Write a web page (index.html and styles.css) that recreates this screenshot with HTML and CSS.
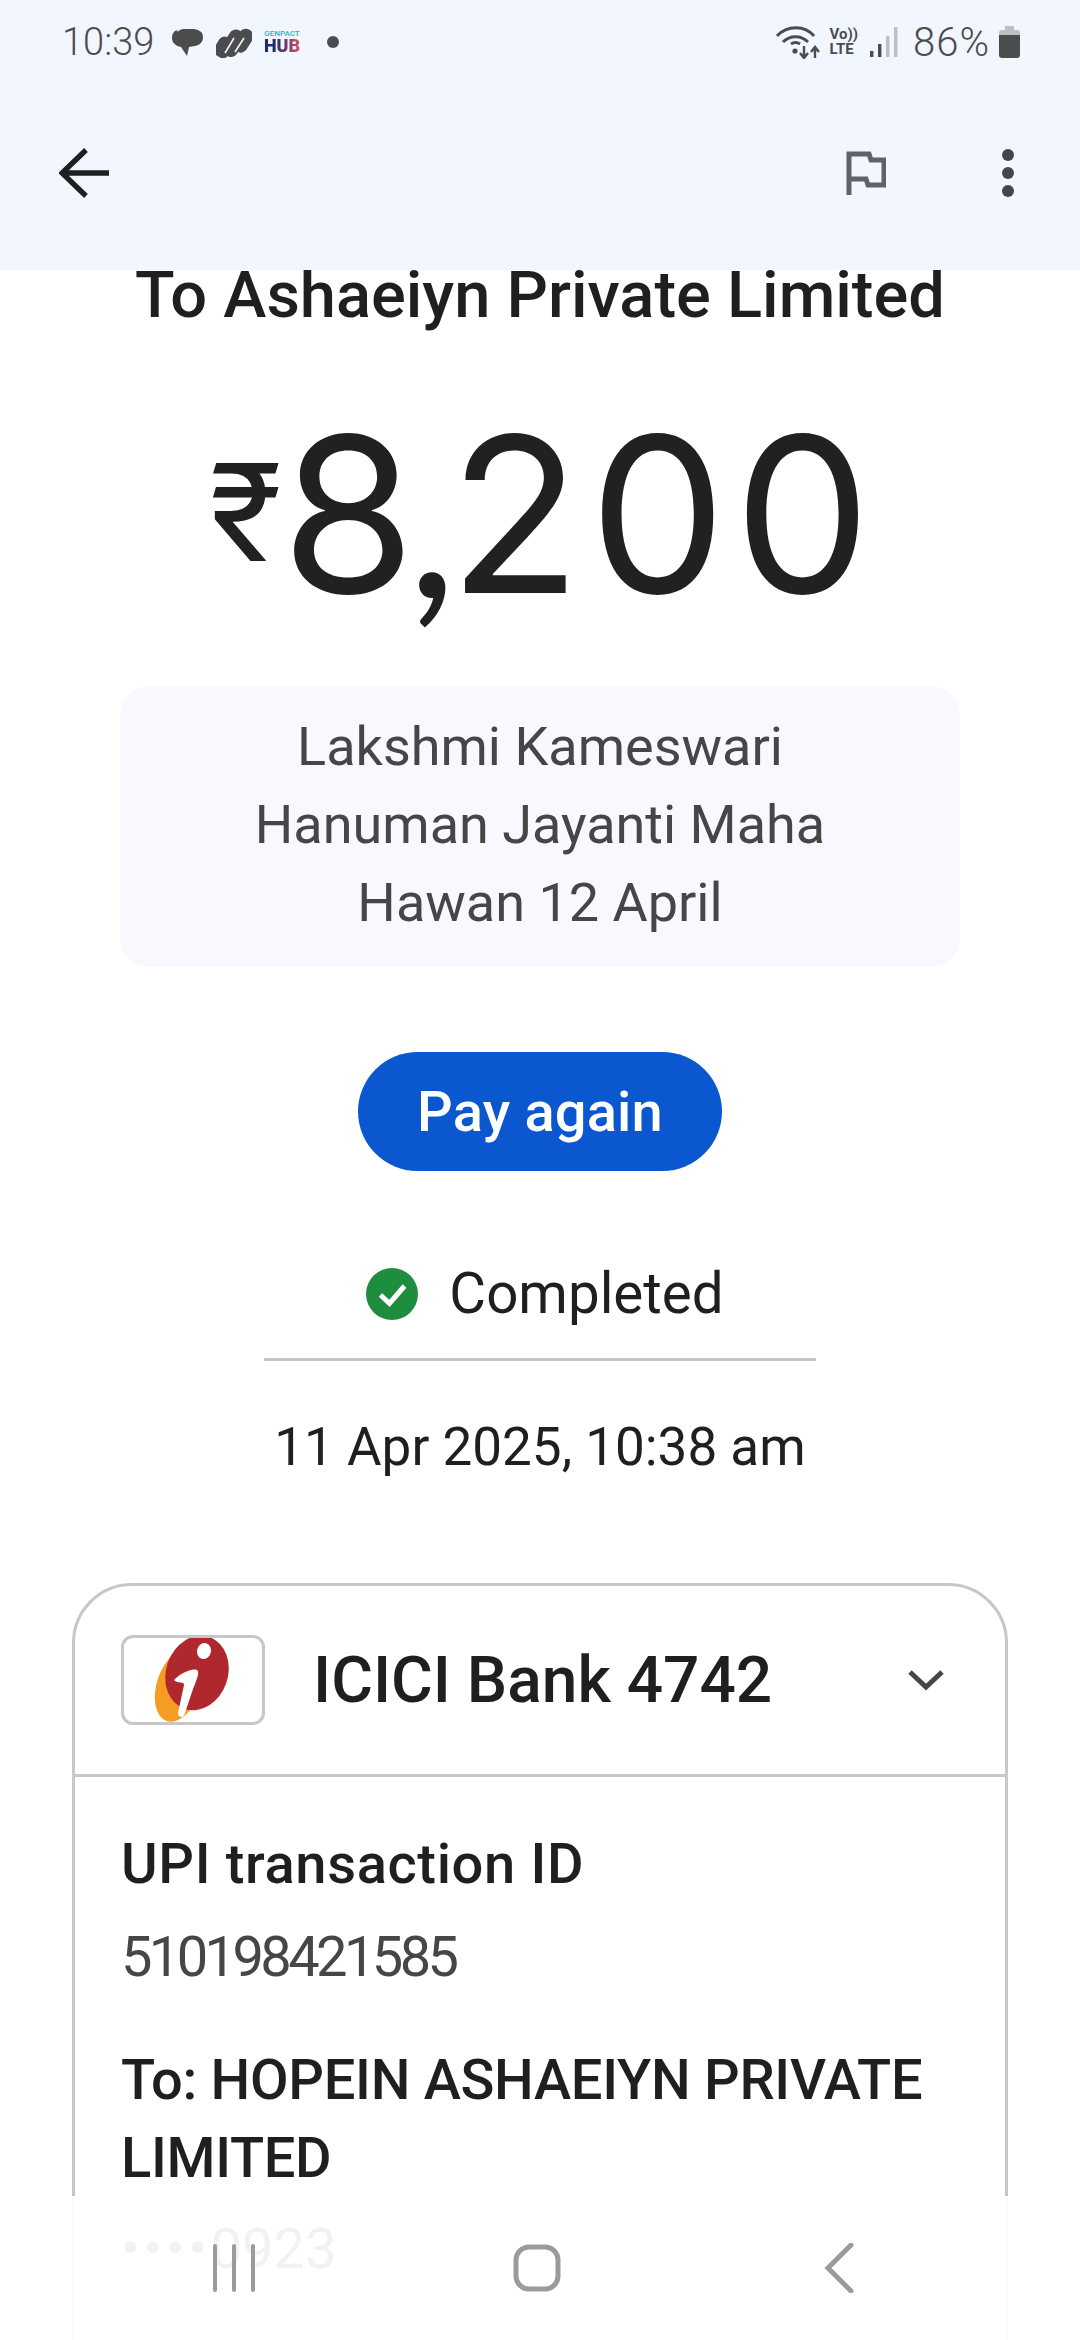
FILE: index.html
```html
<!DOCTYPE html>
<html lang="en">
<head>
<meta charset="utf-8">
<title>Payment details</title>
<link rel="stylesheet" href="styles.css">
</head>
<body>
<div class="screen">
  <header class="appbar">
    <div class="status">
      <div class="status-left">
        <span class="clock">10:39</span>
        <svg class="ic-chat" width="32" height="32" viewBox="0 0 32 32"><path d="M10 3h12c5 0 9 3 9 8s-3 8-8 9l-6 1-2 9-6-9c-5-1-9-4-9-9 0-6 4-9 10-9z" fill="#4b4c4e"/><path d="M5 5c2-2 5-3 8-3h8c3 0 6 1 8 3" fill="none" stroke="#f2f6fe" stroke-width="1.6"/></svg>
        <svg class="ic-app" width="36" height="32" viewBox="0 0 36 32"><g fill="#4b4c4e"><rect x="0" y="11" width="16" height="21" rx="6" transform="rotate(32 8 21)"/><rect x="9" y="3" width="17" height="28" rx="7" transform="rotate(32 17 17)"/><rect x="20" y="2" width="15" height="25" rx="7" transform="rotate(32 27 14)"/></g><path d="M9 27l9-15M19 26l9-14" stroke="#f2f6fe" stroke-width="1.6" fill="none"/></svg>
        <span class="hub"><span class="hub-top">GENPACT</span><span class="hub-main">HUB</span></span>
        <span class="dot"></span>
      </div>
      <div class="status-right">
        <svg width="45" height="34" viewBox="0 0 45 34"><g fill="none" stroke="#4b4c4e" stroke-width="3"><path d="M1 11c10-11 28-11 37 0"/><path d="M7 17c7-7 18-7 25 0"/></g><circle cx="19" cy="26" r="2.6" fill="#4b4c4e"/><path d="M15 19c3-2 6-2 9 0" fill="none" stroke="#4b4c4e" stroke-width="3"/><path d="M28 21v11M24 28l4 5 4-5M39 33V22M35 27l4-5 4 5" fill="none" stroke="#4b4c4e" stroke-width="2.4"/></svg>
        <span class="volte"><span>Vo))</span><span>LTE</span></span>
        <svg class="signal" width="28" height="30" viewBox="0 0 28 30"><rect x="0" y="24" width="3.4" height="6" fill="#4b4c4e"/><rect x="8" y="17" width="3.4" height="13" fill="#4b4c4e"/><rect x="16" y="9" width="3.4" height="21" fill="#bcbfc5"/><rect x="24" y="0" width="3.4" height="30" fill="#bcbfc5"/></svg>
        <span class="battery-text">86%</span>
        <svg class="battery" width="21" height="32" viewBox="0 0 21 32"><path d="M6 0h9v4H6z" fill="#bcbfc5"/><path d="M3 4h15a3 3 0 0 1 3 3v3H0V7a3 3 0 0 1 3-3z" fill="#bcbfc5"/><path d="M0 9h21v20a3 3 0 0 1-3 3H3a3 3 0 0 1-3-3z" fill="#4b4c4e"/></svg>
      </div>
    </div>
    <div class="toolbar">
      <svg width="50" height="50" viewBox="0 0 50 50"><path d="M50 25H4M27 2L3 25l24 23" fill="none" stroke="#1f1f1f" stroke-width="5.4"/></svg>
      <div class="toolbar-right">
        <svg width="40" height="44" viewBox="0 0 40 44"><path d="M3 44V3h20l2 6h13v25H22l-2-6H3" fill="none" stroke="#5f6368" stroke-width="5"/></svg>
        <svg class="kebab" width="14" height="50" viewBox="0 0 14 50"><circle cx="7" cy="7" r="6" fill="#44474a"/><circle cx="7" cy="25" r="6" fill="#44474a"/><circle cx="7" cy="43" r="6" fill="#44474a"/></svg>
      </div>
    </div>
  </header>

  <main class="content">
    <h1 class="payee">To Ashaeiyn Private Limited</h1>
    <div class="amount"><span class="rupee">₹</span><span class="tight">8</span><span class="comma">,</span>200</div>
    <div class="note">Lakshmi Kameswari<br>Hanuman Jayanti Maha<br>Hawan 12 April</div>
    <button class="pay">Pay again</button>
    <div class="state">
      <svg width="52" height="52" viewBox="0 0 52 52"><circle cx="26" cy="26" r="26" fill="#1e8e3e"/><path d="M14.5 27l9 8.5L38.5 18" fill="none" stroke="#fff" stroke-width="5"/></svg>
      <span>Completed</span>
    </div>
    <div class="rule"></div>
    <div class="when">11 Apr 2025, 10:38 am</div>

    <section class="card">
      <div class="card-head">
        <div class="logo">
          <svg width="138" height="84" viewBox="0 0 138 84"><ellipse cx="55" cy="47" rx="22" ry="38" transform="rotate(19 55 47)" fill="#f59d23"/><ellipse cx="73" cy="35" rx="31" ry="38" transform="rotate(19 73 35)" fill="#ae282e"/><ellipse cx="80" cy="13" rx="7" ry="8" transform="rotate(15 80 13)" fill="#fff"/><path d="M50 42c6-6 17-12 23-10 3 2 0 9-4 19l-9 27c-3 2-6 1-6-3l6-28c0-4-6-1-10-5z" fill="#fff"/></svg>
        </div>
        <span class="bank">ICICI Bank 4742</span>
        <svg class="chevron" width="36" height="22" viewBox="0 0 36 22"><path d="M2 3l16 15L34 3" fill="none" stroke="#444746" stroke-width="5"/></svg>
      </div>
      <div class="card-body">
        <div class="label wide">UPI transaction ID</div>
        <div class="value">510198421585</div>
        <div class="label to">To: HOPEIN ASHAEIYN PRIVATE LIMITED</div>
        <div class="value ghost"><span class="dots">••••</span>0923</div>
      </div>
    </section>
  </main>

  <nav class="navbar">
    <svg width="44" height="48" viewBox="0 0 44 48"><path d="M3 2v44M22 2v44M41 2v44" stroke="#9b9b9b" stroke-width="4" stroke-linecap="round"/></svg>
    <svg class="nav-home" width="48" height="48" viewBox="0 0 48 48"><rect x="3" y="3" width="42" height="42" rx="13" fill="none" stroke="#9b9b9b" stroke-width="5"/></svg>
    <svg width="30" height="50" viewBox="0 0 30 50"><path d="M27 2L4 25l23 23" fill="none" stroke="#9b9b9b" stroke-width="5" stroke-linecap="round"/></svg>
  </nav>
</div>
</body>
</html>
```
FILE: styles.css
```css
* { box-sizing: border-box; }
html, body { margin: 0; padding: 0; background: #fff; }
body { font-family: Roboto, "Noto Sans", sans-serif; color: #1f1f1f; }
.screen { position: relative; width: 1080px; height: 2340px; overflow: hidden; display: flex; flex-direction: column; }

.appbar { flex: none; height: 270px; background: #f2f6fe; }
.status { height: 84px; padding: 0 60px 0 62px; display: flex; justify-content: space-between; align-items: center; }
.status-left, .status-right { display: flex; align-items: center; }
.clock { font-size: 38px; font-weight: 300; color: #4b4c4e; width: 110px; }
.ic-chat { margin-right: 12px; }
.hub { display: flex; flex-direction: column; align-items: center; margin-left: 11px; width: 38px; line-height: 1; }
.hub-top { font-size: 8px; color: #2ab3c4; font-weight: 500; white-space: nowrap; }
.hub-main { font-size: 18px; font-weight: 900; margin-top: -1px; background: linear-gradient(90deg, #1e2d6b 30%, #d8505f); -webkit-background-clip: text; background-clip: text; color: transparent; }
.dot { width: 12px; height: 12px; border-radius: 50%; background: #4b4c4e; margin-left: 26px; }
.status-right { gap: 9px; }
.volte { display: flex; flex-direction: column; font-size: 15px; font-weight: 700; line-height: 15px; color: #4b4c4e; }
.signal { margin-left: 3px; }
.battery-text { font-size: 40px; font-weight: 300; letter-spacing: 1px; color: #4b4c4e; margin-left: 6px; }

.toolbar { height: 186px; padding: 0 65px 8px 59px; display: flex; justify-content: space-between; align-items: center; }
.toolbar-right { display: flex; align-items: center; gap: 115px; }

.content { flex: 1; min-height: 0; overflow: hidden; display: flex; flex-direction: column; align-items: center; }
.content > * { flex: none; }
.payee { margin: -14px 0 0; font-size: 65px; line-height: 78px; font-weight: 500; white-space: nowrap; }
.amount { font-family: Inter, Roboto, sans-serif; font-size: 217px; line-height: 240px; margin-top: 60px; padding-left: 9px; letter-spacing: 8px; white-space: nowrap; color: #212121; display: flex; align-items: center; }
.rupee { font-family: Roboto, sans-serif; font-size: 138px; letter-spacing: 0; }
.tight { letter-spacing: -8px; }
.comma { font-family: Lato, sans-serif; letter-spacing: -8px; }
.note { width: 840px; height: 281px; margin-top: 52px; padding: 22px 0; background: #f8f9fe; border-radius: 30px; text-align: center; font-size: 54px; line-height: 78px; color: #444746; }
.pay { width: 364px; height: 119px; margin-top: 85px; border: 0; border-radius: 60px; background: #0b57d0; color: #fff; font: 500 56px Roboto, sans-serif; letter-spacing: .2px; }
.state { display: flex; align-items: center; gap: 31px; margin: 97px 0 0 10px; font-size: 56.5px; line-height: 52px; }
.rule { width: 552px; height: 3px; background: #c4c7c5; margin-top: 38px; }
.when { font-size: 53px; line-height: 60px; margin-top: 56px; }

.card { width: 936px; height: 900px; margin-top: 106px; border: 3px solid #c7c7c7; border-radius: 60px; }
.card-head { height: 191px; padding: 0 61px 0 46px; display: flex; align-items: center; border-bottom: 3px solid #c7c7c7; }
.logo { width: 144px; height: 90px; border: 3px solid #c7c7c7; border-radius: 12px; overflow: hidden; }
.logo svg { display: block; }
.bank { flex: 1; font-size: 64px; font-weight: 500; margin-left: 48px; }
.card-body { padding: 48px 46px 0; }
.label { font-size: 56px; line-height: 78px; font-weight: 500; }
.label.wide { letter-spacing: .65px; }
.label.to { margin-top: 54px; letter-spacing: -.3px; }
.value { font-size: 56px; line-height: 60px; letter-spacing: -3.6px; color: #444746; margin-top: 24px; }
.value.ghost { letter-spacing: 0; margin-top: 22px; }
.dots { letter-spacing: 3.5px; }

.navbar { position: absolute; left: 0; right: 0; bottom: 0; height: 144px; padding: 0 226px 0 212px; background: rgba(255,255,255,.93); display: flex; align-items: center; justify-content: space-between; }
.nav-home { margin-right: 6px; }
```
